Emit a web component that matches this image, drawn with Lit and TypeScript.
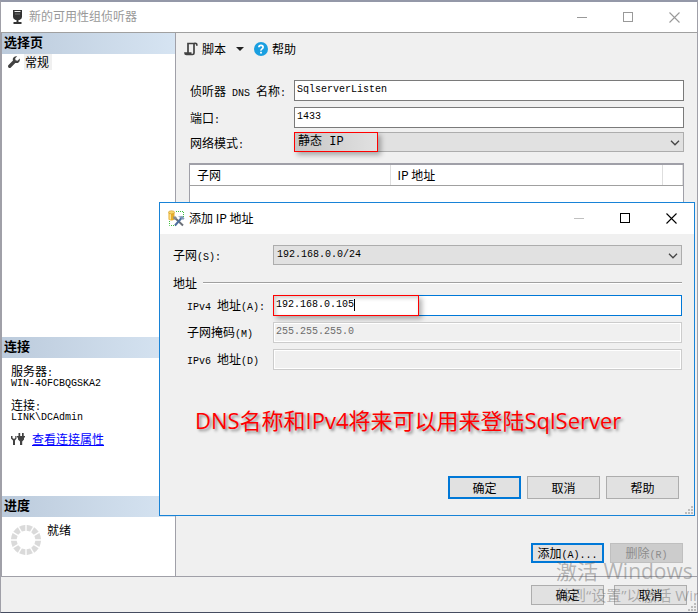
import { LitElement, html, css, svg } from "lit";
import { customElement } from "lit/decorators.js";

/** Wraps runs of Latin text so they sit on the half-width grid beside Chinese text. */
const mixed = (text: string) =>
  (text.match(/[\x20-\x7e]+|[^\x20-\x7e]+/g) ?? []).map((run) =>
    /^[\x20-\x7e]/.test(run) ? html`<span class="half">${run}</span>` : run
  );

const chevron = html`<svg class="chevron" width="10" height="6" viewBox="0 0 10 6" aria-hidden="true">
  <path d="M1 0.8 L5 4.8 L9 0.8" fill="none" stroke="#444" stroke-width="1.3" />
</svg>`;

const minimizeIcon = html`<svg width="11" height="11" viewBox="0 0 11 11"><path d="M0 5.5H10" stroke="currentColor" /></svg>`;
const maximizeIcon = html`<svg width="11" height="11" viewBox="0 0 11 11"><rect x="0.5" y="0.5" width="9" height="9" fill="none" stroke="currentColor" /></svg>`;
const closeIcon = html`<svg width="11" height="11" viewBox="0 0 11 11"><path d="M0.5 0.5L10.5 10.5M10.5 0.5L0.5 10.5" stroke="currentColor" stroke-width="1.1" /></svg>`;

const serverIcon = html`<svg width="16" height="16" viewBox="0 0 16 16" aria-hidden="true">
  <path d="M4 1h9v7q0 2-2.500 3H6.500q-2.500-1-2.500-3z" fill="#333" />
  <path d="M5.500 2.500h6" stroke="#eee" /><path d="M6 5h5" stroke="#777" />
  <path d="M7.500 11h2v2h3v2H4.500v-2h3z" fill="#333" />
</svg>`;

const wrenchIcon = html`<svg width="12" height="12" viewBox="0 0 12 12" aria-hidden="true">
  <path d="M11.7 2.6 9.6 4.7 7.5 4.3 7.2 2.3 9.2 0.3C7.4-.3 5.3.7 4.9 2.6c-.2.8-.1 1.3.1 1.9L.5 9c-.7.8-.6 1.8 0 2.4.7.7 1.7.7 2.4 0L7.3 6.9c2.500.9 5.200-1.300 4.400-4.300z" fill="#424242" />
</svg>`;

const scriptIcon = html`<svg width="14" height="14" viewBox="0 0 14 14" aria-hidden="true">
  <path d="M4 11V1.500H12M10 1.500V11q0 1.500-1.500 1.500H2.500Q1 12.500 1 11H7.500" fill="none" stroke="#424242" stroke-width="1.700" />
  <path d="M10 .7h2.200q1.500 0 1.500 3H12V2H10z" fill="#424242" />
</svg>`;

const helpIcon = html`<svg width="14" height="14" viewBox="0 0 14 14" aria-hidden="true">
  <circle cx="7" cy="7" r="7" fill="#1a9fe0" />
  <path d="M4.900 5.300Q4.900 3.300 7 3.300T9.100 5.200Q9.100 6.200 8 6.900T7 8.700" fill="none" stroke="#fff" stroke-width="1.700" />
  <rect x="6.100" y="9.800" width="1.800" height="1.700" fill="#fff" />
</svg>`;

const plugIcon = html`<svg width="14" height="14" viewBox="0 0 14 14" aria-hidden="true">
  <path d="M0 4v2.500L2 8.500V13H4V8.500L5.500 6.500V4H4.300V6L3 7 1.500 6V4z" fill="#424242" />
  <path d="M7.500 1h1.700v3h1.800V1h1.700v3H14v1.500h-1V7.500L11.200 9.500V13H9V9.500L7 7.500V5.500H6V4h1.500z" fill="#424242" />
</svg>`;

const addressIcon = html`<svg width="17" height="17" viewBox="0 0 17 17" aria-hidden="true">
  <path d="M8 1.500H15.500V8M1.500 11V15.500H8" fill="none" stroke="#3fbf3f" stroke-dasharray="1 1" />
  <path d="M.5 2.500v7q3 2 6 0v-7z" fill="#e8ae2a" />
  <path d="M1.500 3.500v6h1.500v-6z" fill="#fbe39a" />
  <ellipse cx="3.500" cy="2.300" rx="3" ry="1.600" fill="#f8d568" stroke="#c98d14" stroke-width=".5" />
  <path d="M6.500 7.500L15 15.500" stroke="#6b7078" stroke-width="2" />
  <path d="M5 6.500h3l1 2-1.500 1.500-2-1z" fill="#868b92" />
  <path d="M13.500 8L7 15.500" stroke="#4d6f9f" stroke-width="2" />
  <path d="M10 6.500l4.500-.5 2 2.500-1.500 1.500-1.500-1.500z" fill="#8199b8" />
</svg>`;

const grip = html`<svg class="grip" width="8" height="8" viewBox="0 0 8 8" aria-hidden="true">
  <path d="M6 0h2v2H6zM3 3h2v2H3zM6 3h2v2H6zM0 6h2v2H0zM3 6h2v2H3zM6 6h2v2H6z" fill="#bcbcbc" />
</svg>`;

const spinner = html`<svg class="spinner" width="30" height="30" viewBox="0 0 30 30" aria-hidden="true">
  ${Array.from({ length: 12 }, (_, i) => svg`<path d="M11.800 .3Q15 -.3 18.200 .3L16.800 5.800H13.200z" fill="#dadada" transform="rotate(${i * 30 + 15} 15 15)" />`)}
</svg>`;

const captionButtons = html`<div class="caption-buttons">
  <button aria-label="最小化" class="min">${minimizeIcon}</button>
  <button aria-label="最大化">${maximizeIcon}</button>
  <button aria-label="关闭">${closeIcon}</button>
</div>`;

@customElement("app-root")
export class AppRoot extends LitElement {
  static styles = css`
    :host {
      display: block;
      position: relative;
      overflow: hidden;
      font: 12px/16px "Noto Sans CJK SC", sans-serif;
      color: #000;
    }
    * { box-sizing: border-box; }
    button, input, select { font: inherit; color: inherit; margin: 0; border-radius: 0; }
    .half { font: 10px/12px "Liberation Mono", monospace; white-space: pre; }

    .window {
      display: flex;
      flex-direction: column;
      min-height: 100vh;
      background: #f0f0f0;
      border: 1px solid #a0a0a8;
      border-top: 2px solid #9498a8;
      border-bottom-color: #454c60;
    }
    .titlebar {
      display: flex;
      align-items: center;
      height: 31px;
      background: #fff;
      padding-left: 8px;
      gap: 4px;
    }
    .window > .titlebar { color: #999; border-bottom: 1px solid #a0a0a0; }
    .titlebar h1, .titlebar h2 { flex: 1; margin: 0; padding-bottom: 2px; font: inherit; }
    .caption-buttons { display: flex; height: 100%; }
    .caption-buttons button {
      display: flex;
      align-items: center;
      justify-content: center;
      width: 46px;
      padding: 0;
      border: 0;
      background: none;
    }

    .main { flex: 1; display: flex; }
    .side {
      display: flex;
      flex-direction: column;
      width: 175px;
      background: #fff;
      border-left: 1px solid #a0a0a8;
      border-right: 1px solid #a0a0a8;
    }
    .side h2 {
      margin: 0;
      padding-left: 2px;
      height: 21px;
      font-size: 13px;
      line-height: 18px;
      background: linear-gradient(90deg, #bccbdc, #d6e4f2);
    }
    .pages { flex: 1; }
    .page { display: flex; align-items: center; gap: 4px; padding: 0 6px; }
    .page span { background: #f0f0f0; padding: 0 3px 0 1px; }
    .connection { height: 159px; }
    .facts { margin: 0; padding: 5px 9px 0; }
    .facts dt { line-height: 16px; }
    .facts dd { margin: 0 0 8px; line-height: 10px; height: 10px; display: flex; }
    .facts .half { line-height: 10px; }
    .props { display: flex; align-items: center; gap: 7px; padding-left: 9px; margin-top: 3px; }
    a { color: #0000ff; }
    .progress { height: 80px; }
    .status { display: flex; gap: 6px; padding: 5px 9px; }
    .spinner { margin-top: 3px; }

    .content { flex: 1; display: flex; flex-direction: column; padding: 8px 13px 13px 14px; }
    .toolbar { display: flex; align-items: center; height: 16px; margin-left: -6px; }
    .toolbar button { display: flex; align-items: center; gap: 4px; border: 0; padding: 0; background: none; }
    .toolbar .menu { padding: 0 10px; }
    .form { display: grid; grid-template-columns: 104px 1fr; margin-top: 23px; }
    .form label, .address label { padding-top: 2px; line-height: 17px; white-space: nowrap; }
    .field { position: relative; height: 27px; }
    .field.short { height: 25px; }
    .field.combo { height: 20px; }
    input {
      display: block;
      width: 100%;
      height: 21px;
      border: 1px solid #7a7a7a;
      background: #fff;
      padding: 0 2px 3px;
      font: 10px/12px "Liberation Mono", monospace;
      outline: 0;
    }
    select {
      appearance: none;
      display: block;
      width: 100%;
      height: 20px;
      padding: 0 3px;
      border: 1px solid #adadad;
      background: #e1e1e1;
      font: 12px/18px "Liberation Mono", "Noto Sans CJK SC", monospace;
      outline: 0;
    }
    select.digits { font-size: 10px; }
    .chevron { position: absolute; right: 4px; top: 8px; }
    .mark {
      position: absolute;
      left: 0;
      top: 0;
      height: 20px;
      width: 84px;
      border: 1px solid #ff0000;
      box-shadow: 3px 3px 5px rgba(0, 0, 0, 0.3);
      pointer-events: none;
    }
    .mark.wide { width: 146px; height: 21px; box-shadow: 3px 3px 5px rgba(0, 0, 0, 0.3), inset 2px 2px 4px rgba(0, 0, 0, 0.2); }
    .mark.tinted { background: linear-gradient(90deg, rgba(0, 0, 0, 0.12), rgba(0, 0, 0, 0)); }
    .caret { position: absolute; left: 81px; top: 4px; width: 1px; height: 12px; background: #000; }

    .grid { flex: 1; margin: 11px 0 32px -1px; border: 1px solid #a0a0a8; border-top-width: 2px; background: #fff; }
    table { width: 100%; border-collapse: collapse; table-layout: fixed; }
    th {
      height: 20px;
      padding: 0 7px;
      border-bottom: 1px solid #a0a0a0;
      border-right: 1px solid #dedede;
      text-align: left;
      font-weight: 400;
    }
    .c1 { width: 200px; }
    .c3 { width: 20px; }

    .actions { display: flex; justify-content: flex-end; gap: 6px; margin-right: 1px; }
    .btn {
      width: 73px;
      height: 23px;
      padding: 0;
      border: 1px solid #adadad;
      background: #e1e1e1;
      line-height: 16px;
    }
    .content .btn, .footer .btn { height: 20px; }
    .btn.default { border: 2px solid #0078d7; }
    .btn:disabled { background: #cccccc; border-color: #bfbfbf; color: #8c8c8c; }
    .footer {
      display: flex;
      justify-content: flex-end;
      gap: 10px;
      height: 36px;
      padding: 8px 10px 0;
      border-top: 1px solid #a0a0a8;
      position: relative;
    }
    .grip { position: absolute; right: 1px; bottom: 1px; }

    .dialog {
      position: absolute;
      left: 159px;
      right: 3px;
      top: 202px;
      border: 1px solid #1883d7;
      background: #f0f0f0;
    }
    .dialog .min { color: #c0c0c0; }
    .body { padding: 11px 12px 16px 13px; }
    .address { display: grid; grid-template-columns: 100px 1fr; }
    .address label { padding-top: 1px; }
    fieldset { border: 0; margin: 0; padding: 0; min-width: 0; }
    legend { display: flex; align-items: center; gap: 6px; width: 100%; padding: 0; height: 16px; margin: 3px 0 4px; }
    legend::after { content: ""; flex: 1; height: 2px; background: linear-gradient(#a0a0a0 50%, #fff 50%); }
    .group { margin-top: 3px; }
    fieldset label { padding-left: 14px; }
    input.active { border-color: #0078d7; }
    input:disabled { background: #f0f0f0; border-color: #cccccc; box-shadow: inset 0 0 0 1px #fff; color: #6d6d6d; -webkit-text-fill-color: #6d6d6d; }
    .note {
      margin: 28px 0 0 22px;
      font: 22px/32px "Open Sans", "Noto Sans CJK SC", sans-serif;
      color: #ff0000;
      text-shadow: 2px 2px 3px rgba(0, 0, 0, 0.45);
      white-space: nowrap;
    }
    .dialog .actions { margin: 40px 3px 0 0; }

    .watermark {
      position: absolute;
      left: 556px;
      top: 558px;
      margin: 0;
      color: rgba(90, 90, 90, 0.42);
      font: 15px/22px "Open Sans", "Noto Sans CJK SC", sans-serif;
      white-space: nowrap;
      pointer-events: none;
    }
    .watermark strong { display: block; font-size: 21px; font-weight: 400; line-height: 26px; }
  `;

  render() {
    return html`
      <div class="window">
        <header class="titlebar">${serverIcon}<h1>新的可用性组侦听器</h1>${captionButtons}</header>
        <div class="main">
          <aside class="side">
            <section class="pages">
              <h2>选择页</h2>
              <div class="page">${wrenchIcon}<span>常规</span></div>
            </section>
            <section class="connection">
              <h2>连接</h2>
              <dl class="facts">
                <dt>${mixed("服务器:")}</dt>
                <dd>${mixed("WIN-4OFCBQGSKA2")}</dd>
                <dt>${mixed("连接:")}</dt>
                <dd>${mixed("LINK\\DCAdmin")}</dd>
              </dl>
              <div class="props">${plugIcon}<a href="#props">查看连接属性</a></div>
            </section>
            <section class="progress">
              <h2>进度</h2>
              <div class="status">${spinner}<span>就绪</span></div>
            </section>
          </aside>
          <main class="content">
            <div class="toolbar">
              <button>${scriptIcon}脚本</button>
              <button class="menu" aria-label="脚本选项">
                <svg width="8" height="4" viewBox="0 0 8 4"><path d="M0 0h8L4 4z" fill="#222" /></svg>
              </button>
              <button>${helpIcon}帮助</button>
            </div>
            <div class="form">
              <label for="dns">${mixed("侦听器 DNS 名称:")}</label>
              <div class="field"><input id="dns" value="SqlserverListen" /></div>
              <label for="port">${mixed("端口:")}</label>
              <div class="field short"><input id="port" value="1433" /></div>
              <label for="mode">${mixed("网络模式:")}</label>
              <div class="field combo">
                <select id="mode"><option>静态 IP</option></select>
                ${chevron}<span class="mark tinted"></span>
              </div>
            </div>
            <div class="grid">
              <table>
                <thead>
                  <tr><th class="c1">子网</th><th>IP 地址</th><th class="c3"></th></tr>
                </thead>
              </table>
            </div>
            <div class="actions">
              <button class="btn default">${mixed("添加(A)...")}</button>
              <button class="btn" disabled>${mixed("删除(R)")}</button>
            </div>
          </main>
        </div>
        <footer class="footer">
          <button class="btn">确定</button>
          <button class="btn">取消</button>
          ${grip}
        </footer>
      </div>

      <section class="dialog" role="dialog" aria-labelledby="dialog-title">
        <header class="titlebar">${addressIcon}<h2 id="dialog-title">添加 IP 地址</h2>${captionButtons}</header>
        <div class="body">
          <div class="address">
            <label for="subnet">${mixed("子网(S):")}</label>
            <div class="field">
              <select id="subnet" class="digits"><option>192.168.0.0/24</option></select>${chevron}
            </div>
          </div>
          <fieldset class="group">
            <legend>地址</legend>
            <div class="address">
              <label for="ipv4">${mixed("IPv4 地址(A):")}</label>
              <div class="field">
                <input id="ipv4" class="active" value="192.168.0.105" />
                <span class="caret"></span><span class="mark wide"></span>
              </div>
              <label for="mask">${mixed("子网掩码(M)")}</label>
              <div class="field"><input id="mask" value="255.255.255.0" disabled /></div>
              <label for="ipv6">${mixed("IPv6 地址(D)")}</label>
              <div class="field"><input id="ipv6" disabled /></div>
            </div>
          </fieldset>
          <p class="note">DNS名称和IPv4将来可以用来登陆SqlServer</p>
          <div class="actions">
            <button class="btn default">确定</button>
            <button class="btn">取消</button>
            <button class="btn">帮助</button>
          </div>
        </div>
        ${grip}
      </section>

      <p class="watermark"><strong>激活 Windows</strong>转到“设置”以激活 Windows。</p>
    `;
  }
}
